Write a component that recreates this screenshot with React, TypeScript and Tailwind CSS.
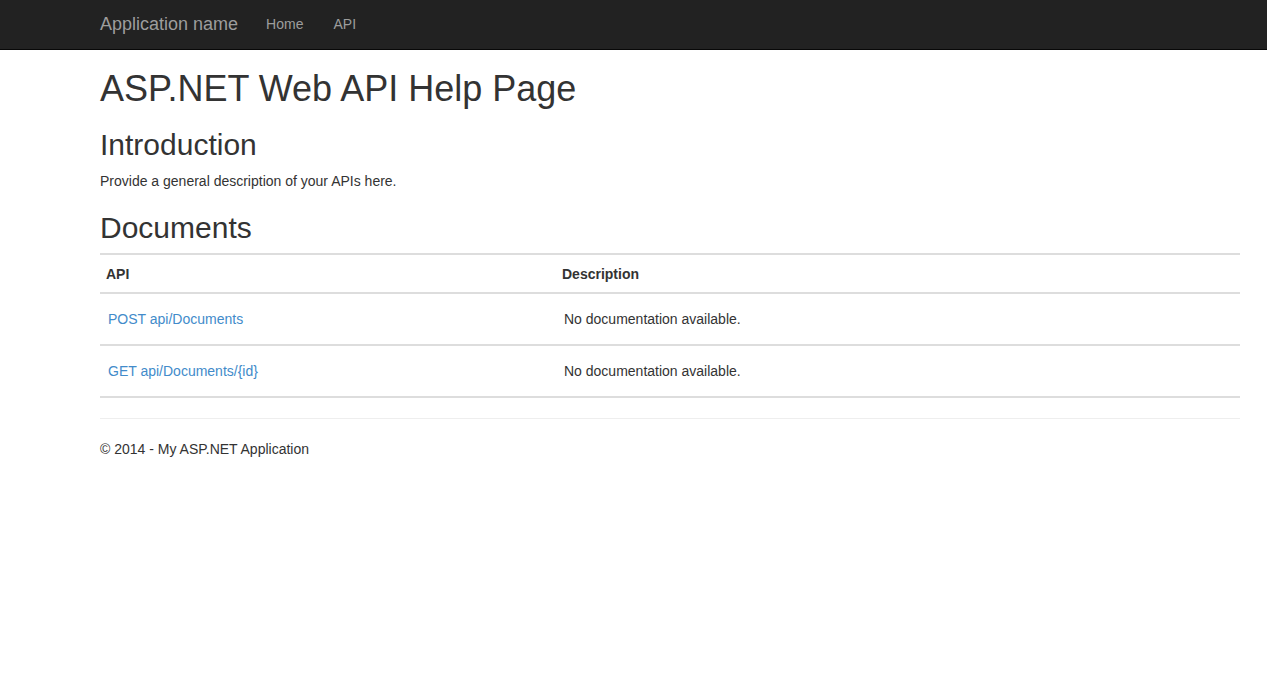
export default function App() {
  const rows = [
    { api: "POST api/Documents", desc: "No documentation available." },
    { api: "GET api/Documents/{id}", desc: "No documentation available." },
  ];

  return (
    <div className="min-h-screen bg-white text-[14px] leading-[20px] text-[#333] font-['Liberation_Sans',Arial,sans-serif]">
      <div className="h-[50px] bg-[#222] border-b border-[#080808]">
        <div className="ml-[100px] w-[1140px] flex items-center h-full pb-[2px]">
          <a className="text-[18px] leading-[20px] text-[#9d9d9d] pr-[13px]">Application name</a>
          <a className="px-[15px] text-[#9d9d9d]">Home</a>
          <a className="px-[15px] text-[#9d9d9d]">API</a>
        </div>
      </div>

      <div className="ml-[100px] w-[1140px]">
        <h1 className="mt-[19px] mb-[10px] text-[36px] leading-[39.6px]">ASP.NET Web API Help Page</h1>
        <h2 className="mt-[19px] mb-[10px] text-[30px] leading-[33px]">Introduction</h2>
        <p className="mb-[10px]">Provide a general description of your APIs here.</p>
        <h2 className="mt-[20px] mb-[9px] text-[30px] leading-[33px]">Documents</h2>

        <div className="border-t-2 border-[#ddd] mb-[20px]">
          <div className="flex border-b-2 border-[#ddd] h-[39px] pt-[2px] items-center font-bold">
            <div className="w-[456px] pl-[6px]">API</div>
            <div className="flex-1 pl-[6px]">Description</div>
          </div>
          {rows.map((r) => (
            <div key={r.api} className="flex border-b-2 border-[#ddd] h-[52px] items-center">
              <div className="w-[456px] pl-[8px]">
                <a className="text-[#428bca]">{r.api}</a>
              </div>
              <div className="flex-1 pl-[8px]">{r.desc}</div>
            </div>
          ))}
        </div>

        <hr className="border-t border-[#eee]" />
        <footer className="mt-[20px]">
          <p>© 2014 - My ASP.NET Application</p>
        </footer>
      </div>
    </div>
  );
}
